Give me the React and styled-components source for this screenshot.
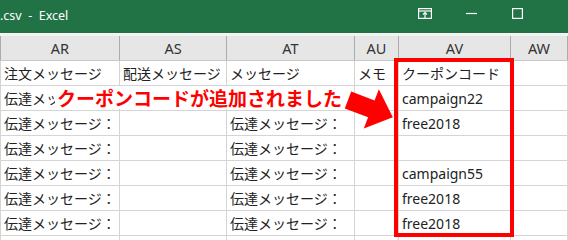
import React from 'react';
import styled, { createGlobalStyle } from 'styled-components';

const GlobalStyle = createGlobalStyle`
  html, body {
    margin: 0;
    padding: 0;
    background: #ffffff;
  }
  body {
    width: 568px;
    height: 240px;
    overflow: hidden;
  }
`;

const COLUMNS = [
  { name: 'AR', width: 120 },
  { name: 'AS', width: 107 },
  { name: 'AT', width: 128 },
  { name: 'AU', width: 44 },
  { name: 'AV', width: 112 },
  { name: 'AW', width: 57 },
];

const MSG = '伝達メッセージ：';

const ROWS = [
  ['注文メッセージ', '配送メッセージ', 'メッセージ', 'メモ', 'クーポンコード', ''],
  [MSG, '', MSG, '', 'campaign22', ''],
  [MSG, '', MSG, '', 'free2018', ''],
  [MSG, '', MSG, '', '', ''],
  [MSG, '', MSG, '', 'campaign55', ''],
  [MSG, '', MSG, '', 'free2018', ''],
  [MSG, '', MSG, '', 'free2018', ''],
  ['', '', '', '', '', ''],
];

const template = COLUMNS.map(c => `${ c.width }px`).join(' ');

const App = () => (
  <Window>
    <GlobalStyle />
    <TitleBar>
      <Title>.csv  -  Excel</Title>
      <Controls>
        <ControlButton>
          <svg width='14' height='11' viewBox='0 0 14 11' fill='none' stroke='#fff' strokeWidth='1.2'>
            <rect x='0.6' y='0.6' width='12.8' height='9.8' />
            <line x1='0.6' y1='3' x2='13.4' y2='3' />
            <line x1='7' y1='4.5' x2='7' y2='10.4' />
            <polyline points='5,6.5 7,4.5 9,6.5' />
          </svg>
        </ControlButton>
        <ControlButton>
          <svg width='11' height='11' viewBox='0 0 11 11' stroke='#fff' strokeWidth='1.2'>
            <line x1='0' y1='5.5' x2='11' y2='5.5' />
          </svg>
        </ControlButton>
        <ControlButton>
          <svg width='11' height='11' viewBox='0 0 11 11' fill='none' stroke='#fff' strokeWidth='1.2'>
            <rect x='0.6' y='0.6' width='9.8' height='9.8' />
          </svg>
        </ControlButton>
      </Controls>
    </TitleBar>
    <Strip />
    <Sheet>
      <HeaderRow>
        { COLUMNS.map(c => <HeaderCell key={ c.name }>{ c.name }</HeaderCell>) }
      </HeaderRow>
      { ROWS.map((row, r) => (
        <Row key={ r }>
          { row.map((value, c) => <Cell key={ c }>{ value }</Cell>) }
          <ScrollEdge />
        </Row>
      )) }
      <Highlight />
      <Callout>クーポンコードが追加されました</Callout>
      <Arrow width='568' height='180' viewBox='0 0 568 180'>
        <polygon
          points='0,-9 25,-9 25,-21 48,0 25,21 25,9 0,9'
          fill='#ff0000'
          transform='translate(348 40) rotate(21)'
        />
      </Arrow>
    </Sheet>
  </Window>
);

export default App;

const Window = styled.div`
  width: 568px;
  height: 240px;
  overflow: hidden;
  display: flex;
  flex-direction: column;
  background: #ffffff;
`;

const TitleBar = styled.div`
  height: 33px;
  flex: none;
  background: #217346;
  display: flex;
  align-items: center;
  justify-content: space-between;
  padding-right: 28px;
`;

const Title = styled.span`
  color: #ffffff;
  font-family: "Noto Sans", "Segoe UI", sans-serif;
  font-size: 12.5px;
  white-space: pre;
  margin-top: -2px;
`;

const Controls = styled.div`
  display: flex;
  height: 100%;
`;

const ControlButton = styled.div`
  width: 46px;
  height: 100%;
  display: flex;
  align-items: center;
  justify-content: center;
  margin-top: -3px;
`;

const Strip = styled.div`
  height: 3px;
  flex: none;
  background: #f3f3f3;
`;

const Sheet = styled.div`
  position: relative;
  flex: 1;
`;

const HeaderRow = styled.div`
  display: grid;
  grid-template-columns: ${ template } 1fr;
  height: 25px;
  background: #e6e6e6;
  border-bottom: 1px solid #c6c6c6;
  box-sizing: border-box;
`;

const HeaderCell = styled.div`
  display: flex;
  align-items: center;
  justify-content: center;
  border-right: 1px solid #ababab;
  font-family: "Noto Sans", sans-serif;
  font-size: 14.5px;
  color: #333333;
  &:first-child {
    border-left: 1px solid #ababab;
  }
`;

const Row = styled.div`
  display: grid;
  grid-template-columns: ${ template } 1fr;
  height: 25px;
  box-sizing: border-box;
`;

const Cell = styled.div`
  border-right: 1px solid #d4d4d4;
  border-bottom: 1px solid #d4d4d4;
  box-sizing: border-box;
  display: flex;
  align-items: center;
  padding-left: 3px;
  overflow: hidden;
  white-space: nowrap;
  font-family: "Noto Sans", "Noto Sans CJK JP", sans-serif;
  font-size: 14px;
  color: #222222;
  &:first-child {
    border-left: 1px solid #d4d4d4;
  }
`;

const ScrollEdge = styled.div`
  background: #e9e9e9;
  border-left: 1px solid #9a9a9a;
  width: 4px;
  justify-self: end;
`;

const Highlight = styled.div`
  position: absolute;
  left: 394px;
  top: 22px;
  width: 120px;
  height: 179px;
  border: 4px solid #ff0000;
  box-sizing: border-box;
`;

const Callout = styled.div`
  position: absolute;
  left: 55px;
  top: 50px;
  height: 23px;
  padding: 0 2px;
  display: flex;
  align-items: center;
  background: #ffffff;
  font-family: "Noto Sans CJK JP", sans-serif;
  font-weight: 700;
  font-size: 19px;
  color: #ff0000;
  white-space: nowrap;
`;

const Arrow = styled.svg`
  position: absolute;
  left: 0;
  top: 24px;
  overflow: visible;
  pointer-events: none;
`;
